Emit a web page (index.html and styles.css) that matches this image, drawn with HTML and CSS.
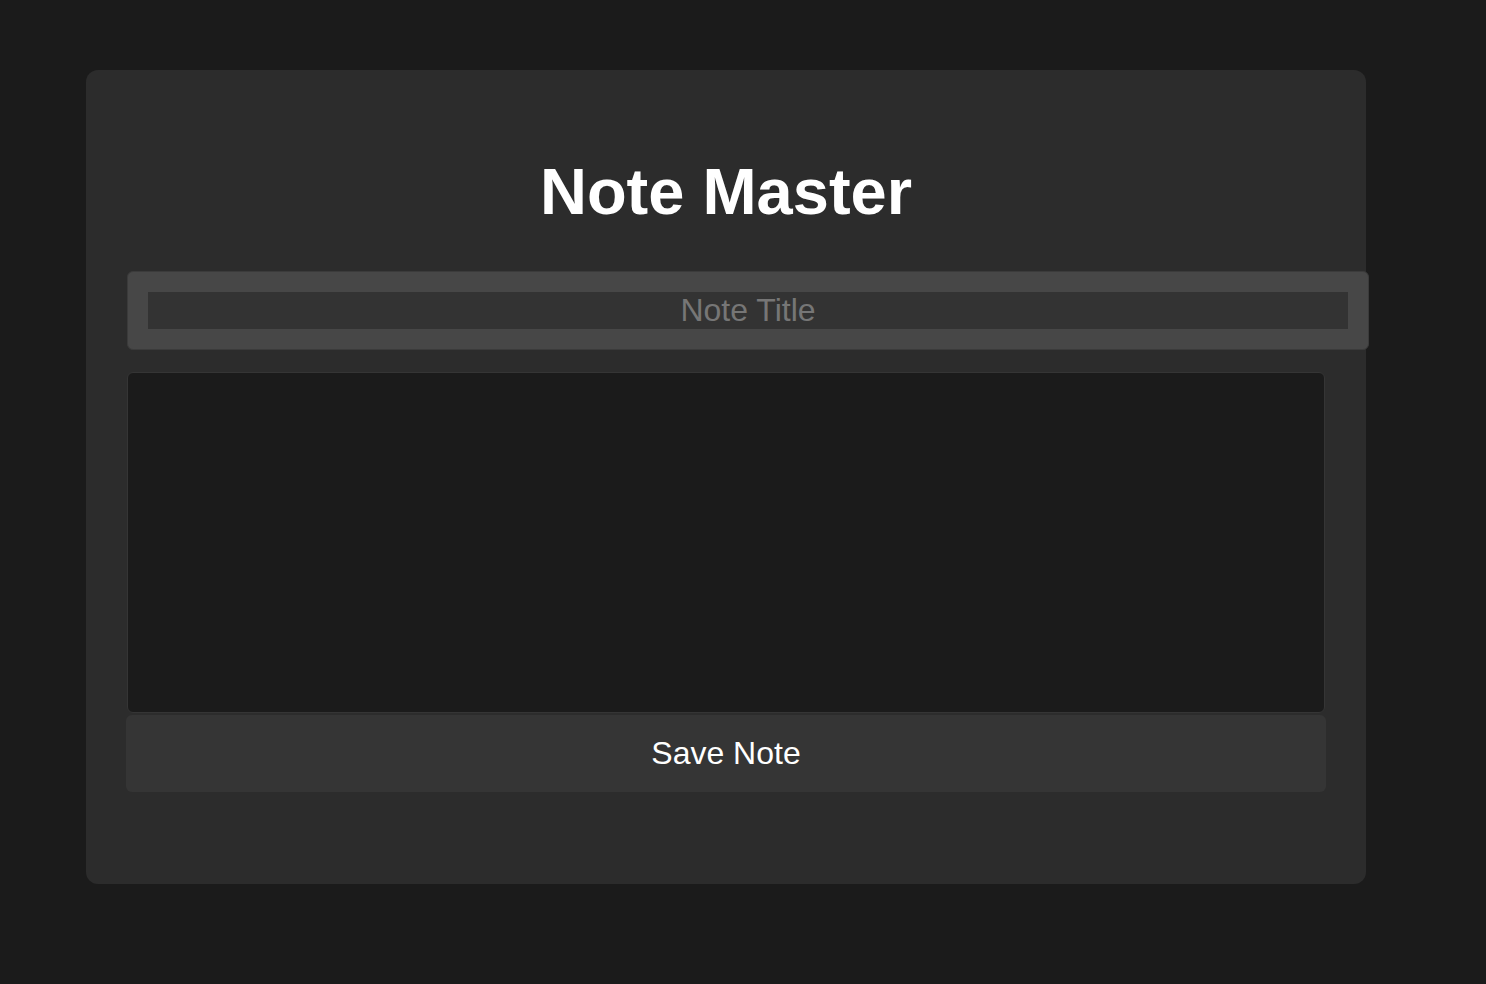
FILE: index.html
```html
<!DOCTYPE html>
<html lang="en">
<head>
<meta charset="utf-8">
<title>Note Master</title>
<link rel="stylesheet" href="styles.css">
</head>
<body>
<main class="app">
  <div class="card">
    <h1 class="title">Note Master</h1>
    <div class="title-field">
      <input class="title-input" type="text" placeholder="Note Title">
    </div>
    <textarea class="note-body"></textarea>
    <button class="save-btn" type="button">Save Note</button>
    <div class="notes-list"></div>
  </div>
</main>
</body>
</html>
```
FILE: styles.css
```css
html, body {
  margin: 0;
  padding: 0;
  background: #1b1b1b;
  font-family: "Liberation Sans", Arial, Helvetica, sans-serif;
  color: #ffffff;
}

.app {
  padding: 70px 120px 100px 86px;
}

.card {
  width: 1280px;
  box-sizing: border-box;
  background: #2c2c2c;
  border-radius: 12px;
  padding: 40px 40px 40px 40px;
  display: flex;
  flex-direction: column;
  align-items: flex-start;
}

.title {
  align-self: stretch;
  text-align: center;
  font-size: 65px;
  line-height: 74px;
  font-weight: 700;
  margin: 45px 0 42px;
  color: #ffffff;
}

.title-field {
  width: 1200px;
  padding: 20px;
  border: 1px solid #3b3b3b;
  border-radius: 6px;
  background: #474747;
  margin-left: 1px;
  flex-shrink: 0;
}

.title-input {
  display: block;
  width: 1200px;
  height: 37px;
  box-sizing: border-box;
  border: 0;
  padding: 0;
  margin: 0;
  background: #333333;
  color: #ffffff;
  font-family: inherit;
  font-size: 32px;
  text-align: center;
  outline: none;
}

.title-input::placeholder {
  color: #767676;
}

.note-body {
  display: block;
  width: 1198px;
  height: 341px;
  box-sizing: border-box;
  margin: 22px 0 0 1px;
  background: #1b1b1b;
  border: 1px solid #353535;
  border-radius: 6px;
  resize: none;
  color: #ffffff;
  font-family: inherit;
  font-size: 16px;
  outline: none;
}

.save-btn {
  display: block;
  width: 1200px;
  height: 77px;
  margin-top: 2px;
  padding: 20px;
  border: 0;
  border-radius: 6px;
  background: #353535;
  color: #ffffff;
  font-family: inherit;
  font-size: 32px;
  line-height: 37px;
  cursor: pointer;
}

.notes-list {
  height: 52px;
}
```
